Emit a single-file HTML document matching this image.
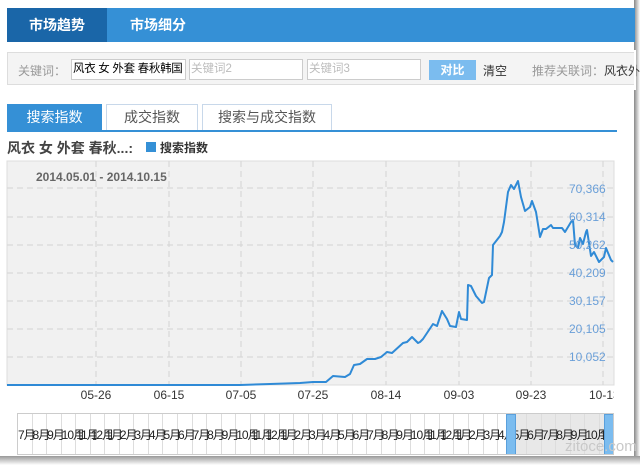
<!DOCTYPE html>
<html><head><meta charset="utf-8"><style>
*{margin:0;padding:0;box-sizing:border-box}
body{width:640px;height:465px;background:#fff;position:relative;overflow:hidden;font-family:"Liberation Sans","Noto Sans CJK SC",sans-serif;}
.a{position:absolute}
.inp{position:absolute;top:59px;height:21px;border:1px solid #ccc;background:#fff;font-size:11.5px;line-height:19px;padding-left:1px;color:#bbb;overflow:hidden;white-space:nowrap}
.tab{position:absolute;top:104px;height:26px;border:1px solid #c8d8ea;border-bottom:none;font-size:14px;line-height:25px;text-align:center;color:#555;background:#fff}
.yl{position:absolute;left:569px;font-size:12px;color:#6a9fd8}
.xl{position:absolute;top:388px;font-size:12px;color:#333;width:50px;text-align:center;white-space:nowrap}
.sc{display:flex;position:absolute;left:0;top:0;height:42px}
.sc span{width:14.55px;flex:none;border-right:1px solid #ddd;font-size:12px;line-height:42px;white-space:nowrap;overflow:visible;color:#222;letter-spacing:-1px}
</style></head><body>
<div class="a" style="left:634px;top:0;width:6px;height:465px;background:linear-gradient(90deg,#888,#fff)"></div>
<div class="a" style="left:0;top:456px;width:640px;height:9px;background:linear-gradient(#999,#fff)"></div>
<div class="a" style="left:7px;top:8px;width:628px;height:34px;background:#3590d6"></div>
<div class="a" style="left:7px;top:8px;width:100px;height:34px;background:#1a66a8;color:#fff;font-size:14px;font-weight:bold;line-height:34px;text-align:center">市场趋势</div>
<div class="a" style="left:54px;top:37px;width:0;height:0;border:5px solid transparent;border-bottom-color:#fff"></div>
<div class="a" style="left:130px;top:8px;height:34px;color:#fff;font-size:14px;font-weight:bold;line-height:34px">市场细分</div>
<div class="a" style="left:7px;top:52px;width:628px;height:33px;background:#f4f4f4;border:1px solid #ddd"></div>
<div class="a" style="left:18px;top:62px;font-size:12px;color:#999">关键词：</div>
<div class="inp" style="left:71px;width:115px;color:#000;letter-spacing:-0.3px">风衣 女 外套 春秋韩国</div>
<div class="inp" style="left:189px;width:114px">关键词2</div>
<div class="inp" style="left:307px;width:114px">关键词3</div>
<div class="a" style="left:429px;top:60px;width:47px;height:20px;background:#7bbcef;color:#fff;font-size:12px;font-weight:bold;line-height:20px;text-align:center">对比</div>
<div class="a" style="left:483px;top:62px;font-size:12px;color:#333">清空</div>
<div class="a" style="left:532px;top:62px;font-size:12px;color:#999;white-space:nowrap">推荐关联词：<span style="color:#333">风衣外</span></div>
<div class="a" style="left:634px;top:50px;width:2px;height:40px;background:#fff"></div>
<div class="tab" style="left:7px;width:95px;background:#3590d6;border-color:#3590d6;color:#fff">搜索指数</div>
<div class="tab" style="left:106px;width:92px">成交指数</div>
<div class="tab" style="left:202px;width:130px">搜索与成交指数</div>
<div class="a" style="left:7px;top:130px;width:610px;height:2px;background:#3590d6"></div>
<div class="a" style="left:7px;top:138px;font-size:14px;color:#444;font-weight:bold">风衣 女 外套 春秋...:</div>
<div class="a" style="left:146px;top:142px;width:10px;height:10px;background:#3590d6"></div>
<div class="a" style="left:160px;top:139px;font-size:12px;color:#333;font-weight:bold">搜索指数</div>
<svg class="a" style="left:0;top:0" width="640" height="465">
<rect x="7" y="161" width="607" height="224" fill="#f1f1f1" stroke="#ddd"/>
<g stroke="#d4d4d4" stroke-dasharray="6,4" stroke-width="1">
<line x1="7" x2="614" y1="188" y2="188"/><line x1="7" x2="614" y1="217" y2="217"/><line x1="7" x2="614" y1="245" y2="245"/><line x1="7" x2="614" y1="273" y2="273"/><line x1="7" x2="614" y1="301" y2="301"/><line x1="7" x2="614" y1="329" y2="329"/><line x1="7" x2="614" y1="357" y2="357"/>
<line y1="161" y2="385" x1="96" x2="96"/><line y1="161" y2="385" x1="169" x2="169"/><line y1="161" y2="385" x1="241" x2="241"/><line y1="161" y2="385" x1="313" x2="313"/><line y1="161" y2="385" x1="386" x2="386"/><line y1="161" y2="385" x1="459" x2="459"/><line y1="161" y2="385" x1="531" x2="531"/><line y1="161" y2="385" x1="603" x2="603"/>
</g>
<polyline fill="none" stroke="#2f8ad6" stroke-width="2" stroke-linejoin="round" points="7,385 240,385 270,384 300,383 313,382 326,382 333,376 345,377 350,374 354,365 360,364 367,359 375,359 381,357 387,352 392,353 403,343 407,342 412,337 418,343 420,342 423,339 433,324 437,326 442,311 447,319 450,326 456,327 459,312 461,319 467,320 468,285 471,286 476,296 482,303 484,302 489,278 492,275 493,245 500,236 502,232 504,222 508,192 511,185 514,189 518,181 521,197 525,211 530,207 532,201 536,212 540,237 543,229 546,229 551,225 553,228 562,228 565,232 571,222 573,220 575,245 578,248 580,238 583,244 586,232 587,230 591,256 594,252 599,262 604,257 606,248 611,260 613,262"/>
</svg>
<div class="a" style="left:36px;top:170px;font-size:12px;color:#666;font-weight:bold">2014.05.01 - 2014.10.15</div>
<div class="yl" style="top:182px">70,366</div><div class="yl" style="top:210px">60,314</div><div class="yl" style="top:238px">50,262</div><div class="yl" style="top:266px">40,209</div><div class="yl" style="top:294px">30,157</div><div class="yl" style="top:322px">20,105</div><div class="yl" style="top:350px">10,052</div>
<div class="xl" style="left:71px">05-26</div><div class="xl" style="left:144px">06-15</div><div class="xl" style="left:216px">07-05</div><div class="xl" style="left:288px">07-25</div><div class="xl" style="left:361px">08-14</div><div class="xl" style="left:434px">09-03</div><div class="xl" style="left:506px">09-23</div><div class="a" style="left:589px;top:388px;width:25px;overflow:hidden;font-size:12px;color:#333;white-space:nowrap">10-13</div>
<div class="a" style="left:17px;top:413px;width:597px;height:42px;border:1px solid #ccc;background:#fff;overflow:hidden">
<div class="a" style="left:488px;top:0;width:108px;height:42px;background:#e8e8e8"></div>
<div class="sc"><span>7月</span><span>8月</span><span>9月</span><span>10月</span><span>11月</span><span>12月</span><span>1月</span><span>2月</span><span>3月</span><span>4月</span><span>5月</span><span>6月</span><span>7月</span><span>8月</span><span>9月</span><span>10月</span><span>11月</span><span>12月</span><span>1月</span><span>2月</span><span>3月</span><span>4月</span><span>5月</span><span>6月</span><span>7月</span><span>8月</span><span>9月</span><span>10月</span><span>11月</span><span>12月</span><span>1月</span><span>2月</span><span>3月</span><span>4月</span><span>5月</span><span>6月</span><span>7月</span><span>8月</span><span>9月</span><span>10月</span><span>11月</span></div>
<div class="a" style="left:488px;top:0;width:10px;height:42px;background:#7bbcef;border:1px solid #5aa0dc"></div>
<div class="a" style="left:586px;top:0;width:10px;height:42px;background:#7bbcef;border:1px solid #5aa0dc"></div>
</div>
<div class="a" style="left:565px;top:438px;font-size:15px;color:#c8c8c8">zitoce.com</div>
</body></html>
